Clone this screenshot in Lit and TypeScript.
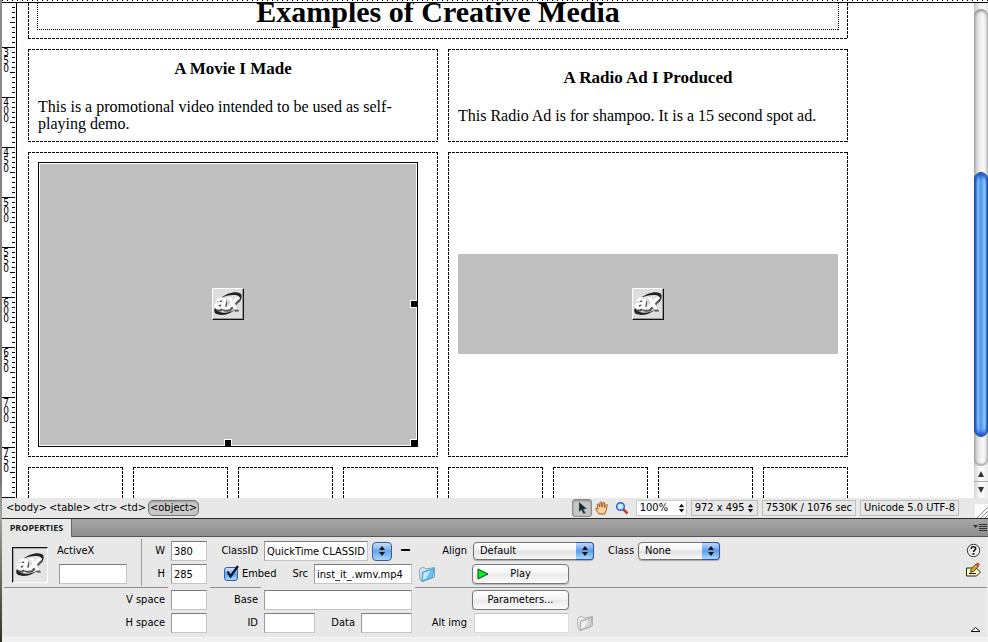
import { LitElement, html, css } from "lit";
import { customElement, property } from "lit/decorators.js";

const RULER_MARKS = [350, 400, 450, 500, 550, 600, 650, 700, 750];
const TAG_PATH = ["<body>", "<table>", "<tr>", "<td>"];

const updown = (size = 8) => html`
  <svg width=${size} height="12" viewBox="0 0 8 12" aria-hidden="true">
    <path d="M4 1 7 5H1zM4 11 1 7h6z" fill="#111" />
  </svg>`;

const folder = (live: boolean) => html`
  <svg width="18" height="18" viewBox="0 0 18 18" aria-hidden="true">
    <path d="M1.500 4.500 3 3l3-.5 2 1.500 8.500-1.500V12L4 16.500 2 14z" fill=${live ? "#d9ecf7" : "#ececec"} stroke=${live ? "#7fa3b8" : "#b4b4b4"} />
    <path d="M4.500 7 16 3.500 14.500 12.500 4 16.500z" fill=${live ? "#6fc3f4" : "#d6d6d6"} stroke=${live ? "#4e9ccc" : "#a6a6a6"} />
    <path d="M5.500 8 12 6 8 13.500 5 14.500z" fill=${live ? "#c8ebff" : "#f1f1f1"} />
  </svg>`;

@customElement("ax-icon")
export class AxIcon extends LitElement {
  @property({ type: Boolean, reflect: true }) sunken = false;
  static styles = css`
    :host { display: block; box-sizing: border-box; width: 32px; height: 32px; background: #dedede;
      border: 1px solid; border-color: #fff #111 #111 #fff; box-shadow: inset -1px -1px #999; }
    :host([sunken]) { width: 36px; height: 36px; padding: 2px; background: #e4e4e4;
      border-color: #111 #fff #fff #111; box-shadow: inset 1px 1px #aaa; }
    svg { display: block; }
    text { font: italic bold 21px "Liberation Sans", Arial, sans-serif; fill: #fff; stroke: #fff; stroke-width: 1px;
      filter: drop-shadow(1px 2px 0 #555); }
  `;
  render() {
    return html`
      <svg width="30" height="30" viewBox="0 0 30 30" role="img" aria-label="ActiveX">
        <path d="M8 9C14 3 27 1 28.500 6c.7 3-1 6-3 8 .5-2.500 2-5 .5-6.500C23 5 14 6 8 9z" fill="#222" />
        <path d="M4 16c-5 6-3 10 4 10 5 0 10-2 14-5-5 2-9 3.500-13 2.500-5-1-6-4-5-7.500z" fill="#222" />
        <text x="2" y="20">ax</text>
      </svg>`;
  }
}

@customElement("vertical-ruler")
export class VerticalRuler extends LitElement {
  static styles = css`
    :host {
      display: block; flex: none; width: 14px; overflow: hidden; border-right: 1px solid #000;
      background:
        linear-gradient(#000 1px, transparent 1px) 10px 4px / 3px 5px repeat-y,
        linear-gradient(#000 1px, transparent 1px) 8px 19px / 5px 50px repeat-y,
        linear-gradient(#000 1px, transparent 1px) 0 44px / 13px 50px repeat-y,
        #fff;
      font: 10px/8px "DejaVu Sans Condensed", "DejaVu Sans", sans-serif;
    }
    div { padding-top: 46px; }
    span { display: block; width: 8px; height: 50px; text-align: center; word-break: break-all; }
  `;
  render() {
    return html`<div>${RULER_MARKS.map((n) => html`<span>${n}</span>`)}</div>`;
  }
}

@customElement("page-canvas")
export class PageCanvas extends LitElement {
  static styles = css`
    :host { display: block; flex: 1; min-width: 0; overflow: hidden; padding-left: 11px; background: #fff;
      font: 16px/17px "Liberation Serif", "Times New Roman", serif; color: #000; }
    .sheet { display: grid; grid-template-columns: repeat(7, minmax(0, 95fr)) minmax(0, 85fr); gap: 10px; max-width: 820px; }
    .cell { box-sizing: border-box; padding: 10px; display: flex; flex-direction: column; justify-content: center;
      background:
        repeating-linear-gradient(90deg, #000 0 3px, transparent 3px 4px) top / 100% 1px no-repeat,
        repeating-linear-gradient(90deg, #000 0 3px, transparent 3px 4px) bottom / 100% 1px no-repeat,
        repeating-linear-gradient(#000 0 3px, transparent 3px 4px) left / 1px 100% no-repeat,
        repeating-linear-gradient(#000 0 3px, transparent 3px 4px) right / 1px 100% no-repeat; }
    .half { grid-column: span 4; }
    .title { grid-column: 1 / -1; padding: 0 9px 9px;
      background:
        repeating-linear-gradient(90deg, #000 0 3px, transparent 3px 4px) bottom / 100% 1px no-repeat,
        repeating-linear-gradient(#000 0 3px, transparent 3px 4px) left / 1px 100% no-repeat,
        repeating-linear-gradient(#000 0 3px, transparent 3px 4px) right / 1px 100% no-repeat; }
    h1 { margin: 0; height: 27px; font-size: 30px; line-height: 18px; text-align: center; white-space: nowrap;
      background:
        repeating-linear-gradient(90deg, #000 0 1px, transparent 1px 2px) bottom / 100% 1px no-repeat,
        repeating-linear-gradient(#000 0 1px, transparent 1px 2px) left / 1px 100% no-repeat,
        repeating-linear-gradient(#000 0 1px, transparent 1px 2px) right / 1px 100% no-repeat; }
    h2 { margin: 0 0 19px; font-size: 17px; line-height: 20px; text-align: center; }
    p { margin: 0; }
    .object { display: grid; place-items: center; background: #c0c0c0; }
    .movie { position: relative; box-sizing: border-box; width: 380px; max-width: 100%; height: 285px; padding-bottom: 1px;
      border: 1px solid #000; box-shadow: inset 0 0 0 1px #fff; }
    .radio { height: 100px; margin-bottom: 1px; }
    .handle { position: absolute; width: 6px; height: 6px; background: #000; border: solid #fff; border-width: 1px 0 0 1px; }
    .e { right: 0; top: calc(50% - 5px); border-bottom-width: 1px; }
    .s { bottom: 0; left: calc(50% - 4px); border-right-width: 1px; }
    .se { right: 0; bottom: 0; }
    .stub { height: 95px; }
  `;
  render() {
    return html`
      <div class="sheet">
        <div class="cell title"><h1>Examples of Creative Media</h1></div>
        <section class="cell half">
          <h2>A Movie I Made</h2>
          <p>This is a promotional video intended to be used as self-playing demo.</p>
        </section>
        <section class="cell half">
          <h2>A Radio Ad I Produced</h2>
          <p>This Radio Ad is for shampoo. It is a 15 second spot ad.</p>
        </section>
        <div class="cell half">
          <div class="object movie">
            <ax-icon></ax-icon>
            <i class="handle e"></i><i class="handle s"></i><i class="handle se"></i>
          </div>
        </div>
        <div class="cell half"><div class="object radio"><ax-icon></ax-icon></div></div>
        ${Array.from({ length: 8 }, () => html`<div class="cell stub"></div>`)}
      </div>`;
  }
}

@customElement("scroll-rail")
export class ScrollRail extends LitElement {
  static styles = css`
    :host { display: flex; flex-direction: column; flex: none; width: 14px; box-sizing: border-box; padding-top: 6px;
      background: linear-gradient(90deg, #c4c4c4, #f2f2f2 40%, #fff 70%, #e6e6e6); }
    .track { flex: 1; display: flex; flex-direction: column; border-radius: 7px;
      background: linear-gradient(90deg, #b9b9b9, #e3e3e3 30%, #fafafa 65%, #dcdcdc);
      box-shadow: inset 0 2px 3px #8a8a8a, inset 0 -2px 2px #aaa; }
    .before { flex: 164; }
    .thumb { flex: 264; box-sizing: border-box; border: 1px solid #1c48a0; border-radius: 7px;
      background: linear-gradient(90deg, #2a68d4, #8fc4fb 25%, #4d97ee 45%, #5aa9f7 60%, #a5dcff 85%, #3a7bd8);
      box-shadow: inset 0 4px 4px -1px #1b4fc0, inset 0 -4px 4px -1px #1b4fc0; }
    .after { flex: 29; }
    button { display: grid; place-items: center; width: 14px; height: 16px; padding: 0; border: 0; border-bottom: 1px solid #aaa;
      background: linear-gradient(90deg, #d4d4d4, #fff 50%, #ececec); }
    button + button { border: 0; }
  `;
  render() {
    return html`
      <div class="track"><div class="before"></div><div class="thumb"></div><div class="after"></div></div>
      <button aria-label="Scroll up"><svg width="8" height="6" viewBox="0 0 8 6"><path d="M4 0 7 6H1z" fill="#333" /></svg></button>
      <button aria-label="Scroll down"><svg width="8" height="6" viewBox="0 0 8 6"><path d="M4 6 1 0h6z" fill="#333" /></svg></button>`;
  }
}

@customElement("status-bar")
export class StatusBar extends LitElement {
  static styles = css`
    :host { display: flex; align-items: center; flex: none; height: 20px; padding-left: 4px; background: #e8e8e8;
      border-bottom: 1px solid #2a2a2a; font: 11px/14px "DejaVu Sans Condensed", "DejaVu Sans", sans-serif; color: #000; }
    nav { display: flex; gap: 2px; margin-right: auto; }
    button { padding: 0; border: 0; background: none; font: inherit; color: inherit; white-space: nowrap; }
    .current { margin: -1px 0; padding: 0 1px; border: 1px solid #777; border-radius: 5px;
      background: #c9c9c9; box-shadow: inset 0 1px 2px #999; }
    .tool { display: grid; place-items: center; width: 20px; height: 18px; }
    .on { box-sizing: border-box; border: 1px solid #8a8a8a; border-radius: 3px; background: #c6c6c6; box-shadow: inset 0 1px 2px #888; }
    .zoom { position: relative; margin-left: 4px; }
    select { appearance: none; box-sizing: border-box; width: 51px; height: 16px; padding: 0 3px; border: 1px solid #ccc; border-radius: 0;
      background: #fff; font: inherit; color: #000; display: block; }
    .zoom svg { position: absolute; right: 2px; top: 2px; pointer-events: none; }
    .box { display: flex; align-items: center; box-sizing: border-box; height: 16px; margin-left: 4px; padding: 0 3px;
      border: 1px solid #bdbdbd; white-space: nowrap; gap: 2px; }
    .grip { align-self: flex-end; width: 13px; height: 14px; margin-left: 16px; }
  `;
  render() {
    return html`
      <nav aria-label="Tag selector">
        ${TAG_PATH.map((t) => html`<button>${t}</button>`)}<button class="current">&lt;object&gt;</button>
      </nav>
      <button class="tool on" aria-label="Select tool">
        <svg width="12" height="14" viewBox="0 0 12 14"><path d="M3 1v10l2.500-2.300L7.500 13l2-.8-2-4.200H11z" fill="#16232e" stroke="#8aa" stroke-width=".5" /></svg>
      </button>
      <button class="tool" aria-label="Hand tool">
        <svg width="14" height="14" viewBox="0 0 14 14"><path d="M4 13C2.500 11 .8 8.500.7 7.500c.2-1 1.400-.6 2.300.8L2.300 3.500c.2-1 1.300-1 1.600 0L4.800 6 5 1.500c.3-1 1.500-1 1.700 0L7 6l1-4.300c.4-.9 1.500-.6 1.500.3L9.300 6.500 11 3.700c.6-.8 1.600-.2 1.300.7-.8 2-.5 3-1.300 5.300L9.700 13z" fill="#fbd3a0" stroke="#a8561a" /></svg>
      </button>
      <button class="tool" aria-label="Zoom tool">
        <svg width="14" height="14" viewBox="0 0 14 14"><path d="m8 8 4.500 4.500" stroke="#c2402c" stroke-width="2.500" /><circle cx="5.500" cy="5.500" r="3.800" fill="#c9ebff" stroke="#2c62d0" stroke-width="1.500" /></svg>
      </button>
      <div class="zoom"><select aria-label="Zoom"><option>100%</option></select>${updown(7)}</div>
      <button class="box">972 x 495 ${updown(7)}</button>
      <span class="box">7530K / 1076 sec</span>
      <span class="box">Unicode 5.0 UTF-8</span>
      <svg class="grip" viewBox="0 0 13 14" aria-hidden="true"><path d="M0 0h13v14H0z" fill="#fff" /><path d="M2 14 13 3M6 14l7-7M10 14l3-3" stroke="#888" fill="none" /></svg>`;
  }
}

@customElement("properties-panel")
export class PropertiesPanel extends LitElement {
  static styles = css`
    :host { display: block; flex: none; background: #f0f0f0; padding-bottom: 4px;
      font: 11px/14px "DejaVu Sans Condensed", "DejaVu Sans", sans-serif; color: #000; }
    header { display: flex; align-items: stretch; justify-content: space-between; height: 17px; border-bottom: 1px solid #555;
      background: linear-gradient(#a6a6a6, #8f8f8f); }
    h2 { margin: 0 0 -1px; width: 69px; text-align: center; background: #e8e8e8; border-right: 1px solid #666;
      font: bold 9px/18px "Open Sans", "Noto Sans", sans-serif; color: #222; }
    header button { padding: 0 1px; border: 0; background: none; }
    .body { position: relative; display: grid; grid-template-columns: 36px 81px 24px 36px 45px 148px 49px 121px minmax(0, 1fr) 15px;
      grid-template-rows: 23px 26px 23px 20px; column-gap: 6px; padding: 4px 6px 4px 10px; margin-right: 1px; background: #e8e8e8;
      border-bottom: 1px solid #f4f4f4; box-sizing: border-box; }
    .body::before { content: ""; position: absolute; left: 2px; right: 0; top: 50px; border-top: 1px solid #8e8e8e; }
    label, .name { white-space: nowrap; line-height: 20px; }
    .l { justify-self: end; }
    input:not([type="checkbox"]) { position: relative; box-sizing: border-box; width: 100%; min-width: 0; height: 20px; padding: 0 2px; border: 1px solid;
      border-color: #7c7c7c #c4c4c4 #c4c4c4 #9a9a9a; border-radius: 0; background: #fff; box-shadow: 0 0 0 3px #e8e8e8; font: inherit; color: inherit; }
    .ax { grid-row: 1 / 3; margin-top: 6px; }
    .rule { grid-area: 1 / 3 / 3 / 4; width: 0; height: 47px; margin-top: -2px; border-left: 1px solid #9a9a9a; }
    .name { grid-area: 1 / 2; padding-left: 3px; }
    .nm { grid-area: 2 / 2; padding: 0 8px 0 5px; }
    .c3 { grid-column: 2 / 4; } .c4 { grid-column: 4; } .c5 { grid-column: 5; } .c6 { grid-column: 6; }
    .c7 { grid-column: 7; } .c8 { grid-column: 8; } .c9 { grid-column: 9; }
    .r1 { grid-row: 1; } .r2 { grid-row: 2; } .r3 { grid-row: 3; } .r4 { grid-row: 4; }
    .line { display: flex; align-items: center; height: 20px; min-width: 0; }
    .end { justify-content: flex-end; }
    .wide { grid-column: 5 / 7; }
    .line .classid { width: 104px; } .line .src { width: 98px; margin-left: 6px; } .line .short { width: 51px; }
    .line .alt { width: 95px; flex: none; margin: 0 7px 0 1px; border-color: #c4c4c4 #ddd #ddd #d0d0d0; }
    .push { margin: 0 6px 0 auto; }
    .step { display: grid; place-items: center; width: 20px; height: 19px; margin: 0 9px 0 4px; padding: 0; border: 1px solid #3e5d94; border-radius: 4px;
      background: linear-gradient(#c9dffb, #6aa6ee 50%, #a5d6ff); }
    .plain { flex: none; padding: 0; border: 0; background: none; display: block; height: 18px; }
    .minus { width: 9px; height: 2px; margin-bottom: 2px; background: #000; }
    .check { position: relative; width: 15px; height: 16px; margin-right: 3px; }
    .check input { appearance: none; display: block; width: 14px; height: 14px; margin: 1px 0 0; border: 1px solid #3a5c98; border-radius: 3px;
      background: linear-gradient(#d4e6fb, #62a4ec 55%, #a8dcff); box-sizing: border-box; }
    .check svg { position: absolute; left: 0; top: -1px; pointer-events: none; }
    .embed { margin-right: 16px; }
    .pop { position: relative; height: 18px; }
    .pop select { appearance: none; box-sizing: border-box; display: block; width: 100%; height: 18px; padding: 0 24px 0 6px; border: 1px solid #707070; border-radius: 4px;
      background: linear-gradient(#fff, #f3f3f3 45%, #dfdfdf 50%, #fafafa); font: inherit; color: inherit; box-shadow: 0 1px 1px #aaa; }
    .cap { position: absolute; right: 0; top: 0; display: grid; place-items: center; width: 18px; height: 18px; box-sizing: border-box; pointer-events: none;
      border: 1px solid #34529c; border-left: 0; border-radius: 0 4px 4px 0; background: linear-gradient(#c3d9fa, #5c9cec 50%, #a7dcff); }
    .align { width: 121px; } .class { width: 82px; }
    .c9.line label { margin: 0 4px 0 8px; }
    .btn { position: relative; box-sizing: border-box; width: 97px; height: 20px; margin-left: -1px; padding: 0; border: 1px solid #777; border-radius: 4px;
      background: linear-gradient(#fff, #f6f6f6 45%, #e9e9e9 50%, #fcfcfc); box-shadow: 0 1px 1px #b5b5b5; font: inherit; color: inherit; }
    .btn svg { position: absolute; left: 4px; top: 3px; }
    .side { grid-area: 1 / 10 / 5 / 11; display: flex; flex-direction: column; gap: 1px; }
    .side svg { display: block; }
    .side :last-child.plain { margin-top: auto; height: 8px; }
  `;
  render() {
    return html`
      <header>
        <h2>PROPERTIES</h2>
        <button aria-label="Panel menu"><svg width="14" height="9" viewBox="0 0 14 9"><path d="M0 2h5L2.500 5z" fill="#333" /><path d="M6 1.500h8M6 3.500h8M6 5.500h8M6 7.500h8" stroke="#333" /></svg></button>
      </header>
      <div class="body">
        <ax-icon class="ax" sunken></ax-icon>
        <label class="name" for="name">ActiveX</label>
        <div class="nm"><input id="name" /></div>
        <div class="rule"></div>
        <label class="l c3 r1" for="w">W</label><input class="c4 r1" id="w" .value=${"380"} />
        <label class="l c3 r2" for="h">H</label><input class="c4 r2" id="h" .value=${"285"} />
        <label class="l c3 r3" for="vs">V space</label><input class="c4 r3" id="vs" />
        <label class="l c3 r4" for="hs">H space</label><input class="c4 r4" id="hs" />

        <label class="l c5 r1" for="cid">ClassID</label>
        <div class="line c6 r1">
          <input class="classid" id="cid" .value=${"QuickTime CLASSID"} />
          <button class="step" aria-label="Choose ClassID">${updown()}</button>
          <button class="plain minus" aria-label="Remove ClassID"></button>
        </div>
        <div class="line end wide r2">
          <span class="check"><input type="checkbox" id="embed" checked />
            <svg width="16" height="16" viewBox="0 0 16 16"><path d="m3.500 6.500 3 5L14 1" fill="none" stroke="#0d1526" stroke-width="2.300" /></svg>
          </span>
          <label class="embed" for="embed">Embed</label>
          <label for="src">Src</label><input class="src" id="src" .value=${"inst_it_.wmv.mp4"} />
        </div>
        <label class="l c5 r3" for="base">Base</label><input class="c6 r3" id="base" />
        <label class="l c5 r4" for="oid">ID</label>
        <div class="line c6 r4">
          <input class="short" id="oid" />
          <label class="push" for="data">Data</label><input class="short" id="data" />
        </div>

        <label class="l c7 r1" for="align">Align</label>
        <div class="line c8 r1"><div class="pop align"><select id="align"><option>Default</option></select><span class="cap">${updown()}</span></div></div>
        <div class="line c9 r1"><label for="class">Class</label><div class="pop class"><select id="class"><option>None</option></select><span class="cap">${updown()}</span></div></div>
        <div class="line c7 r2"><button class="plain" aria-label="Browse for source">${folder(true)}</button></div>
        <button class="btn c8 r2"><svg width="12" height="12" viewBox="0 0 12 12"><path d="M1 1v10l10-5z" fill="#00f020" stroke="#064b0a" /></svg>Play</button>
        <button class="btn c8 r3">Parameters...</button>
        <label class="l c7 r4" for="alt">Alt img</label>
        <div class="line c8 r4"><input class="alt" id="alt" /><button class="plain" aria-label="Browse for image">${folder(false)}</button></div>

        <div class="side">
          <button class="plain" aria-label="Help"><svg width="15" height="15" viewBox="0 0 15 15"><circle cx="7.500" cy="7.500" r="6.200" fill="#f4f4f4" stroke="#333" /><path d="M5.300 6c0-3 4.400-2.800 4.400-.4C9.700 7.200 7.500 7 7.500 9" fill="none" stroke="#111" stroke-width="1.600" /><path d="M6.600 10h1.800v1.800H6.600z" /></svg></button>
          <button class="plain" aria-label="Quick tag editor"><svg width="15" height="15" viewBox="0 0 15 15"><path d="M.5 6h9.500l4.500 4-4 4H.5z" fill="#fdfbb8" stroke="#222" /><path d="M3 11.500h7" stroke="#222" /><path d="M5 7.500 10 2l2.500 2L7.500 9.500l-3 .8z" fill="#f2a51d" stroke="#222" stroke-width=".8" /><path d="M10 2 11.500.500l2.500 2L12.500 4z" fill="#e8392c" /></svg></button>
          <button class="plain" aria-label="Collapse panel"><svg width="15" height="7" viewBox="0 0 15 7"><path d="m5 5.500 4.500-4 4.500 4z" fill="#fff" stroke="#111" /></svg></button>
        </div>
      </div>`;
  }
}

@customElement("app-root")
export class AppRoot extends LitElement {
  static styles = css`
    :host { display: flex; flex-direction: column; box-sizing: border-box; height: 100vh; padding-left: 2px; overflow: hidden;
      background: linear-gradient(#8f8a8a, #777 75%, #a5a5a0 80%, #2e3320); }
    .top-ruler { flex: none; height: 2px; border-bottom: 1px solid #000;
      background: linear-gradient(90deg, #000 1px, transparent 1px) 0 0 / 5px 1px repeat-x, #fff; }
    main { flex: 1; min-height: 0; display: flex; }
  `;
  render() {
    return html`
      <div class="top-ruler"></div>
      <main>
        <vertical-ruler></vertical-ruler>
        <page-canvas></page-canvas>
        <scroll-rail></scroll-rail>
      </main>
      <status-bar></status-bar>
      <properties-panel></properties-panel>`;
  }
}
